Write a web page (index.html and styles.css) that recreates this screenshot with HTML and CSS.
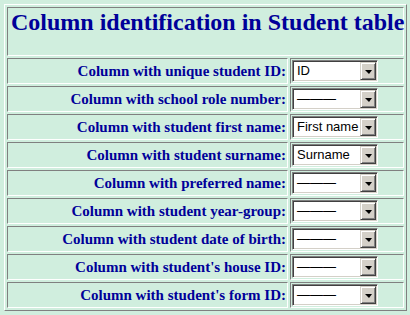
FILE: index.html
```html
<!DOCTYPE html>
<html>
<head>
<meta charset="utf-8">
<link rel="stylesheet" href="styles.css">
</head>
<body>
<table class="grid">
  <colgroup>
    <col class="col-label">
    <col class="col-field">
  </colgroup>
  <tr>
    <th class="title" colspan="2">Column identification in Student table</th>
  </tr>
  <tr>
    <td class="label">Column with unique student ID:</td>
    <td class="field"><div class="combo"><span class="value">ID</span><span class="btn"><span class="arrow"></span></span></div></td>
  </tr>
  <tr>
    <td class="label">Column with school role number:</td>
    <td class="field"><div class="combo"><span class="value">———</span><span class="btn"><span class="arrow"></span></span></div></td>
  </tr>
  <tr>
    <td class="label">Column with student first name:</td>
    <td class="field"><div class="combo"><span class="value">First name</span><span class="btn"><span class="arrow"></span></span></div></td>
  </tr>
  <tr>
    <td class="label">Column with student surname:</td>
    <td class="field"><div class="combo"><span class="value">Surname</span><span class="btn"><span class="arrow"></span></span></div></td>
  </tr>
  <tr>
    <td class="label">Column with preferred name:</td>
    <td class="field"><div class="combo"><span class="value">———</span><span class="btn"><span class="arrow"></span></span></div></td>
  </tr>
  <tr>
    <td class="label">Column with student year-group:</td>
    <td class="field"><div class="combo"><span class="value">———</span><span class="btn"><span class="arrow"></span></span></div></td>
  </tr>
  <tr>
    <td class="label">Column with student date of birth:</td>
    <td class="field"><div class="combo"><span class="value">———</span><span class="btn"><span class="arrow"></span></span></div></td>
  </tr>
  <tr>
    <td class="label">Column with student's house ID:</td>
    <td class="field"><div class="combo"><span class="value">———</span><span class="btn"><span class="arrow"></span></span></div></td>
  </tr>
  <tr>
    <td class="label">Column with student's form ID:</td>
    <td class="field"><div class="combo"><span class="value">———</span><span class="btn"><span class="arrow"></span></span></div></td>
  </tr>
</table>
</body>
</html>
```
FILE: styles.css
```css
html, body {
  margin: 0;
  padding: 0;
  background: #d0eede;
}
body {
  padding: 4px;
  font-family: "Liberation Serif", "Times New Roman", serif;
}
.grid {
  border-collapse: separate;
  border-spacing: 2px;
  width: 403px;
  border: 1px solid;
  border-color: #ffffff #808080 #808080 #ffffff;
  table-layout: fixed;
}
.col-label {
  width: 281px;
}
.col-field {
  width: 114px;
}
.grid th, .grid td {
  border: 1px solid;
  border-color: #808080 #ffffff #ffffff #808080;
  padding: 1px;
}
.title {
  height: 45px;
  text-align: left;
  vertical-align: top;
  color: #000099;
  font-size: 24px;
  font-weight: bold;
  white-space: nowrap;
  padding-left: 3px !important;
}
.label {
  height: 22px;
  text-align: right;
  vertical-align: middle;
  color: #000099;
  font-size: 15px;
  font-weight: bold;
  white-space: nowrap;
}
.field {
  height: 22px;
  vertical-align: middle;
}
.combo {
  width: 86px;
  height: 22px;
  box-sizing: border-box;
  background: #ffffff;
  border: 1px solid;
  border-color: #808080 #ffffff #ffffff #808080;
  box-shadow: inset 1px 1px 0 #404040, inset -1px -1px 0 #d4d0c8;
  display: flex;
  align-items: stretch;
  padding: 1px;
}
.value {
  flex: 1;
  font-family: "Liberation Sans", Arial, sans-serif;
  font-size: 13px;
  line-height: 18px;
  color: #000000;
  padding-left: 3px;
  overflow: hidden;
  white-space: nowrap;
}
.btn {
  width: 16px;
  box-sizing: border-box;
  background: #d4d0c8;
  border: 1px solid;
  border-color: #d4d0c8 #404040 #404040 #d4d0c8;
  box-shadow: inset 1px 1px 0 #ffffff, inset -1px -1px 0 #808080;
  display: flex;
  align-items: center;
  justify-content: center;
}
.arrow {
  width: 0;
  height: 0;
  border-left: 4px solid transparent;
  border-right: 3px solid transparent;
  border-top: 4px solid #000000;
  margin-top: 1px;
}
```
